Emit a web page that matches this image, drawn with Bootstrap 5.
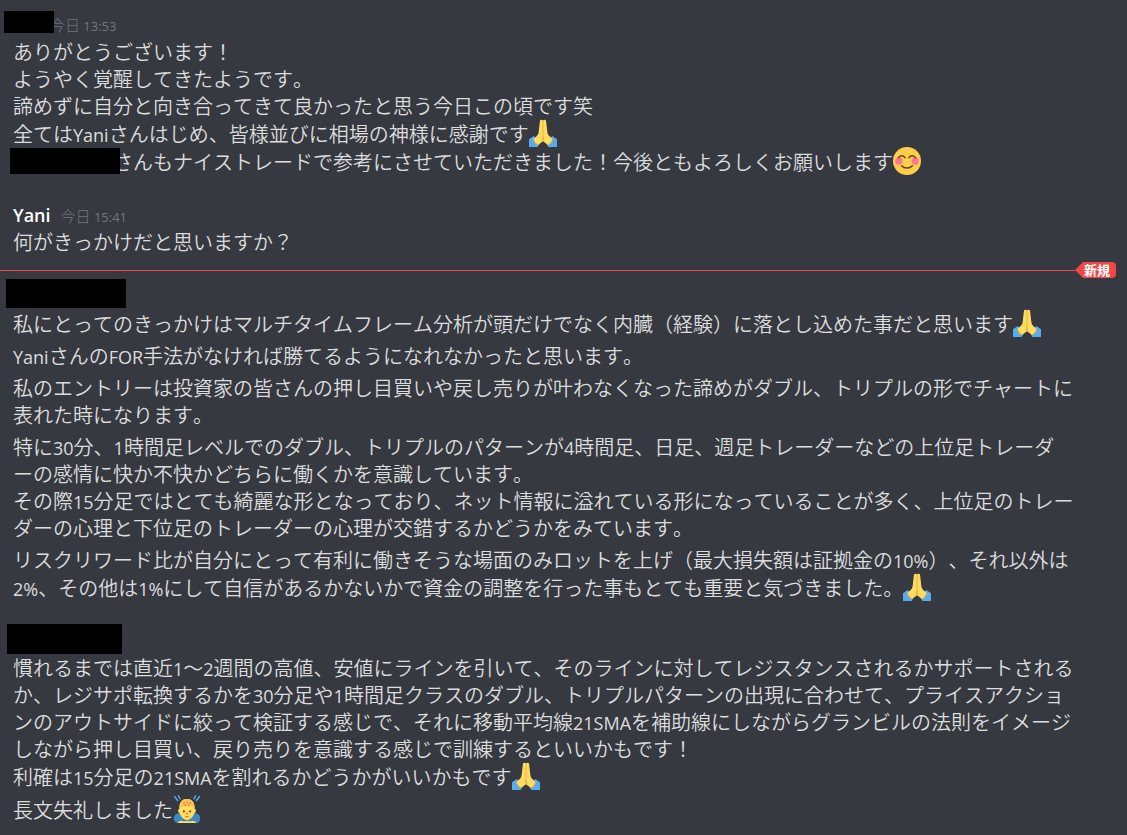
<!DOCTYPE html>
<html lang="ja">
<head>
<meta charset="utf-8">
<meta name="viewport" content="width=device-width, initial-scale=1">
<title>チャット</title>
<link href="https://cdn.jsdelivr.net/npm/bootstrap@5.3.0/dist/css/bootstrap.min.css" rel="stylesheet">
<style>
  body { background: #36393f; color: #dcddde; font-family: "Noto Sans CJK JP", sans-serif; font-size: 20px; font-weight: 350; font-kerning: none; text-spacing-trim: space-all; line-height: 27px; }
  .chat-log { padding: 11px 0; }
  .message-group { padding: 0 40px 0 13px; }
  .message-text { margin: 0 0 5px; }
  .latin { font-family: "Open Sans", "Noto Sans CJK JP", sans-serif; font-size: 18px; font-weight: 400; line-height: 1; }
  .author { margin-right: 10px; color: #fff; font-family: "Open Sans", sans-serif; font-size: 18px; font-weight: 600; line-height: 26px; }
  .stamp { color: #72767d; font-size: 15px; font-weight: 300; line-height: 14px; }
  .stamp .latin { font-size: 13px; }
  .first-header { margin-bottom: 5px; }
  .reply-group { margin-top: 27px; }
  .last-group { margin-top: 23px; }
  .redacted { background: #000; position: relative; z-index: 1; }
  .redacted-first { width: 50px; height: 22px; margin: 0 -4px 0 -9px; }
  .redacted-inline { display: inline-block; width: 110px; height: 26px; margin: 0 -7px 1px -3px; vertical-align: bottom; }
  .redacted-name { width: 120px; height: 29px; margin: 1px 0 1px -7px; }
  .redacted-reply { width: 115px; height: 30px; margin: 0 0 0 -6px; }
  .emoji { width: 28px; height: 28px; vertical-align: bottom; }
  .new-line { margin: 7px 11px 0 0; }
  .new-rule { border-top: 1px solid #f04747; }
  .new-tag { width: 41px; height: 16px; padding-left: 9px; background: #f04747; color: #fff; font-size: 13px; font-weight: 700; line-height: 15px; border-radius: 0 4px 4px 0; clip-path: polygon(0 50%, 8px 0, 100% 0, 100% 100%, 8px 100%); }
</style>
</head>
<body>
<svg class="d-none" aria-hidden="true">
  <symbol id="pray" viewBox="0 0 36 36">
    <path fill="#55acee" d="M0 26l6-4 8 9-3 5H0zM36 26l-6-4-8 9 3 5h11z"/>
    <path fill="#ffdc5d" d="M18 2c-1-1.500-4-1.500-4 1l-1.500 13c-.3 3-1.500 5.500-4.500 7.500L5.500 26c.5 3 3 6 6 7.500l6.500-5 6.500 5c3-1.500 5.500-4.500 6-7.500L28 23.500c-3-2-4.200-4.500-4.500-7.500L22 3c0-2.500-3-2.500-4-1z"/>
    <path fill="none" stroke="#e3a54b" stroke-width="1" d="M18 2v21l-1 5M18 23l1 5"/>
    <path fill="none" stroke="#ef9645" stroke-width="1" d="M5.500 26c.5 3 3 6 6 7.500M30.500 26c-.5 3-3 6-6 7.500"/>
  </symbol>
  <symbol id="blush" viewBox="0 0 36 36">
    <circle cx="18" cy="18" r="18" fill="#ffcc4d"/>
    <circle cx="7.500" cy="18" r="4.700" fill="#ff7892"/>
    <circle cx="28.500" cy="18" r="4.700" fill="#ff7892"/>
    <path fill="none" stroke="#664500" stroke-width="1.800" stroke-linecap="round" d="M7 14c1.500-3.600 7-3.600 8.500 0M20.500 14c1.500-3.600 7-3.600 8.500 0M11 24c3.500 4 10.500 4 14 0"/>
  </symbol>
  <symbol id="bow" viewBox="0 0 36 36">
    <path fill="none" stroke="#55acee" stroke-width="1.800" stroke-linecap="round" d="M2 2l4 5M7 1l2 4M34 2l-4 5M29 1l-2 4"/>
    <path fill="#3b88c3" d="M1 30c0-5 4-7 9-7h16c5 0 9 2 9 7 0 4-2 6-5 6H6c-3 0-5-2-5-6z"/>
    <path fill="#ffdc5d" d="M6 36c1-3 5-4 8-2l4-1 4 1c3-2 7-1 8 2z"/>
    <path fill="#ffdc5d" d="M8 18C8 9 12 5 18 5s10 4 10 13c2 0 2 5-.5 5C26 28 22 32 18 32s-8-4-9.500-9C6 23 6 18 8 18z"/>
    <path fill="#ffc34d" d="M8.500 17C8 9 12 5 18 5s10 4 9.500 12c-2-2-4-3-9.500-3s-7.500 1-9.500 3z"/>
    <g fill="#dd2e44"><circle cx="14" cy="10" r=".8"/><circle cx="18" cy="9" r=".8"/><circle cx="22" cy="10" r=".8"/><circle cx="16" cy="13" r=".8"/><circle cx="20" cy="13" r=".8"/></g>
    <g fill="#664500"><ellipse cx="14" cy="21" rx="1.200" ry="1.500"/><ellipse cx="22" cy="21" rx="1.200" ry="1.500"/></g>
    <path fill="none" stroke="#c1694f" stroke-width="1.200" stroke-linecap="round" d="M17 24h2M16 28q2-1 4 0"/>
  </symbol>
</svg>

<main class="chat-log">
  <article class="message-group">
    <header class="first-header d-flex align-items-end">
      <span class="redacted redacted-first"></span>
      <time class="stamp">今日 <span class="latin">13:53</span></time>
    </header>
    <p class="message-text mb-0">ありがとうございます！<br>ようやく覚醒してきたようです。<br>諦めずに自分と向き合ってきて良かったと思う今日この頃です笑<br>全ては<span class="latin">Yani</span>さんはじめ、皆様並びに相場の神様に感謝です<svg class="emoji" role="img" aria-label="🙏"><use href="#pray"/></svg><br><span class="redacted redacted-inline"></span>さんもナイストレードで参考にさせていただきました！今後ともよろしくお願いします<svg class="emoji" role="img" aria-label="😊"><use href="#blush"/></svg></p>
  </article>

  <article class="message-group reply-group">
    <header class="d-flex align-items-baseline">
      <span class="author">Yani</span>
      <time class="stamp">今日 <span class="latin">15:41</span></time>
    </header>
    <p class="message-text mb-0">何がきっかけだと思いますか？</p>
  </article>

  <div class="new-line d-flex align-items-center" role="separator">
    <div class="new-rule flex-grow-1"></div>
    <span class="new-tag">新規</span>
  </div>

  <article class="message-group">
    <div class="redacted redacted-name"></div>
    <p class="message-text">私にとってのきっかけはマルチタイムフレーム分析が頭だけでなく内臓（経験）に落とし込めた事だと思います<svg class="emoji" role="img" aria-label="🙏"><use href="#pray"/></svg></p>
    <p class="message-text"><span class="latin">Yani</span>さんの<span class="latin">FOR</span>手法がなければ勝てるようになれなかったと思います。</p>
    <p class="message-text">私のエントリーは投資家の皆さんの押し目買いや戻し売りが叶わなくなった諦めがダブル、トリプルの形でチャートに<br>表れた時になります。</p>
    <p class="message-text">特に<span class="latin">30</span>分、<span class="latin">1</span>時間足レベルでのダブル、トリプルのパターンが<span class="latin">4</span>時間足、日足、週足トレーダーなどの上位足トレーダ<br>ーの感情に快か不快かどちらに働くかを意識しています。<br>その際<span class="latin">15</span>分足ではとても綺麗な形となっており、ネット情報に溢れている形になっていることが多く、上位足のトレー<br>ダーの心理と下位足のトレーダーの心理が交錯するかどうかをみています。</p>
    <p class="message-text">リスクリワード比が自分にとって有利に働きそうな場面のみロットを上げ（最大損失額は証拠金の<span class="latin">10%</span>）、それ以外は<br><span class="latin">2%</span>、その他は<span class="latin">1%</span>にして自信があるかないかで資金の調整を行った事もとても重要と気づきました。<svg class="emoji" role="img" aria-label="🙏"><use href="#pray"/></svg></p>
  </article>

  <article class="message-group last-group">
    <div class="redacted redacted-reply"></div>
    <p class="message-text">慣れるまでは直近<span class="latin">1</span>～<span class="latin">2</span>週間の高値、安値にラインを引いて、そのラインに対してレジスタンスされるかサポートされる<br>か、レジサポ転換するかを<span class="latin">30</span>分足や<span class="latin">1</span>時間足クラスのダブル、トリプルパターンの出現に合わせて、プライスアクショ<br>ンのアウトサイドに絞って検証する感じで、それに移動平均線<span class="latin">21SMA</span>を補助線にしながらグランビルの法則をイメージ<br>しながら押し目買い、戻り売りを意識する感じで訓練するといいかもです！<br>利確は<span class="latin">15</span>分足の<span class="latin">21SMA</span>を割れるかどうかがいいかもです<svg class="emoji" role="img" aria-label="🙏"><use href="#pray"/></svg></p>
    <p class="message-text mb-0">長文失礼しました<svg class="emoji" role="img" aria-label="🙇"><use href="#bow"/></svg></p>
  </article>
</main>
<script src="https://cdn.jsdelivr.net/npm/bootstrap@5.3.0/dist/js/bootstrap.bundle.min.js"></script>
</body>
</html>
